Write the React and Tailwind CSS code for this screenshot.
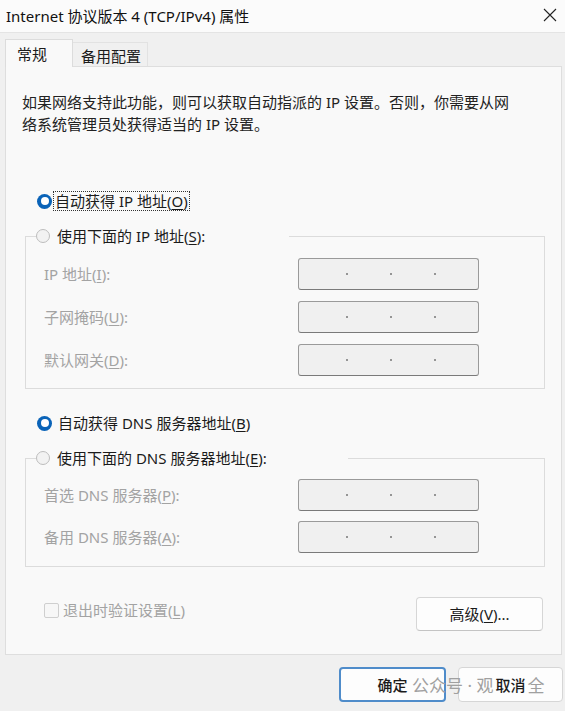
const FONT = "font-['Noto_Sans','Noto_Sans_CJK_SC',sans-serif]";

function Key({ children }) {
  return <span className="underline underline-offset-2 decoration-1">{children}</span>;
}

function Radio({ checked }) {
  if (checked) {
    return (
      <span className="flex h-[15px] w-[15px] shrink-0 items-center justify-center rounded-full bg-[#0a63b8]">
        <span className="h-[8px] w-[8px] rounded-full bg-white" />
      </span>
    );
  }
  return <span className="h-[14px] w-[14px] shrink-0 rounded-full border border-[#bdbdbd] bg-[#f2f2f2]" />;
}

function IpBox() {
  return (
    <div className="flex h-[32px] w-[181px] items-center rounded-[3px] border border-[#9a9a9a] border-b-[#7a7a7a] bg-[#f0f0f0]">
      <div className="ml-[47px] flex gap-[42px]">
        <span className="h-[2px] w-[2px] rounded-full bg-[#777]" />
        <span className="h-[2px] w-[2px] rounded-full bg-[#777]" />
        <span className="h-[2px] w-[2px] rounded-full bg-[#777]" />
      </div>
    </div>
  );
}

function FieldRow({ label, k, rest }) {
  return (
    <div className="flex items-center">
      <span className="w-[254px] text-[15px] leading-5 text-[#a3a3a3]">
        {label}(<Key>{k}</Key>){rest}
      </span>
      <IpBox />
    </div>
  );
}

export default function App() {
  return (
    <div className={`relative h-[711px] w-[565px] overflow-hidden bg-[#f0f0f0] text-[#1b1b1b] ${FONT}`}>
      {/* title bar */}
      <div className="flex h-[33px] items-center justify-between border-b border-[#e4e4e4] bg-[#fbfbfb] pl-[6px] pr-[8px]">
        <span className="text-[15px] leading-5 text-[#111]">Internet 协议版本 4 (TCP/IPv4) 属性</span>
        <svg width="14" height="14" viewBox="0 0 14 14" className="mb-[2px]">
          <path d="M1 1 L13 13 M13 1 L1 13" stroke="#222" strokeWidth="1.1" fill="none" />
        </svg>
      </div>

      {/* tabs */}
      <div className="mt-[6px] flex items-end pl-[5px]">
        <div className="relative z-10 -mb-px flex h-[28px] w-[68px] items-start border border-b-0 border-[#dcdcdc] bg-[#f9f9f9] pl-[11px] pt-[4px] text-[15px] leading-5">
          常规
        </div>
        <div className="flex h-[24px] w-[75px] items-start border border-b-0 border-l-0 border-[#e2e2e2] bg-[#f0f0f0] pl-[8px] pt-[3px] text-[15px] leading-5">
          备用配置
        </div>
      </div>

      {/* panel */}
      <div className="ml-[5px] mr-[3px] h-[589px] border border-[#dedede] bg-[#f9f9f9]">
        <p className="mt-[24px] pl-[16px] text-[15px] leading-[22px] text-[#222]">
          如果网络支持此功能，则可以获取自动指派的 IP 设置。否则，你需要从网
          <br />
          络系统管理员处获得适当的 IP 设置。
        </p>

        <div className="mt-[56px] flex h-[20px] items-center pl-[31px]">
          <Radio checked />
          <span className="ml-[1px] border border-dotted border-[#333] pl-[1px] pr-[1px] text-[15px] leading-[18px]">
            自动获得 IP 地址(<Key>O</Key>)
          </span>
        </div>

        <fieldset className="ml-[19px] mr-[16px] mt-[15px] border border-[#dcdcdc] pb-[12px] pl-[18px]">
          <legend className="-ml-[8px] flex h-[20px] w-[253px] items-center gap-[7px] text-[15px] leading-5">
            <Radio />
            <span>
              使用下面的 IP 地址(<Key>S</Key>):
            </span>
          </legend>
          <div className="mt-[12px] flex flex-col gap-[11px]">
            <FieldRow label="IP 地址" k="I" rest=":" />
            <FieldRow label="子网掩码" k="U" rest=":" />
            <FieldRow label="默认网关" k="D" rest=":" />
          </div>
        </fieldset>

        <div className="mt-[24px] flex h-[20px] items-center gap-[6px] pl-[31px] text-[15px] leading-5">
          <Radio checked />
          <span>
            自动获得 DNS 服务器地址(<Key>B</Key>)
          </span>
        </div>

        <fieldset className="ml-[19px] mr-[16px] mt-[15px] border border-[#dcdcdc] pb-[13px] pl-[18px]">
          <legend className="-ml-[8px] flex h-[20px] w-[312px] items-center gap-[7px] text-[15px] leading-5">
            <Radio />
            <span>
              使用下面的 DNS 服务器地址(<Key>E</Key>):
            </span>
          </legend>
          <div className="mt-[11px] flex flex-col gap-[10px]">
            <FieldRow label="首选 DNS 服务器" k="P" rest=":" />
            <FieldRow label="备用 DNS 服务器" k="A" rest=":" />
          </div>
        </fieldset>

        <div className="mr-[18px] mt-[30px] flex items-start justify-between pl-[38px]">
          <div className="mt-[3px] flex items-center gap-[4px]">
            <span className="h-[15px] w-[15px] rounded-[2px] border border-[#cfcfcf] bg-[#f7f7f7]" />
            <span className="text-[15px] leading-5 text-[#a3a3a3]">
              退出时验证设置(<Key>L</Key>)
            </span>
          </div>
          <button className="flex h-[34px] w-[127px] items-center justify-center rounded-[4px] border border-[#d6d6d6] border-b-[#c4c4c4] bg-[#fdfdfd] text-[15px] leading-5">
            高级(<Key>V</Key>)...
          </button>
        </div>
      </div>

      {/* dialog buttons */}
      <div className="mt-[12px] flex justify-end gap-[12px] pr-[2px]">
        <button className="flex h-[35px] w-[107px] items-center justify-center rounded-[4px] border-2 border-[#4f8cca] bg-[#fdfdfd] text-[15px] font-medium leading-5">
          确定
        </button>
        <button className="flex h-[35px] w-[105px] items-center justify-center rounded-[4px] border border-[#d6d6d6] bg-[#fdfdfd] text-[15px] font-medium leading-5">
          取消
        </button>
      </div>

      {/* watermark */}
      <div className="pointer-events-none absolute left-[412px] top-[676px] text-[17px] leading-5 text-[#a0a0a0]">
        公众号 · 观<span className="opacity-0">信安</span>全
      </div>
    </div>
  );
}
